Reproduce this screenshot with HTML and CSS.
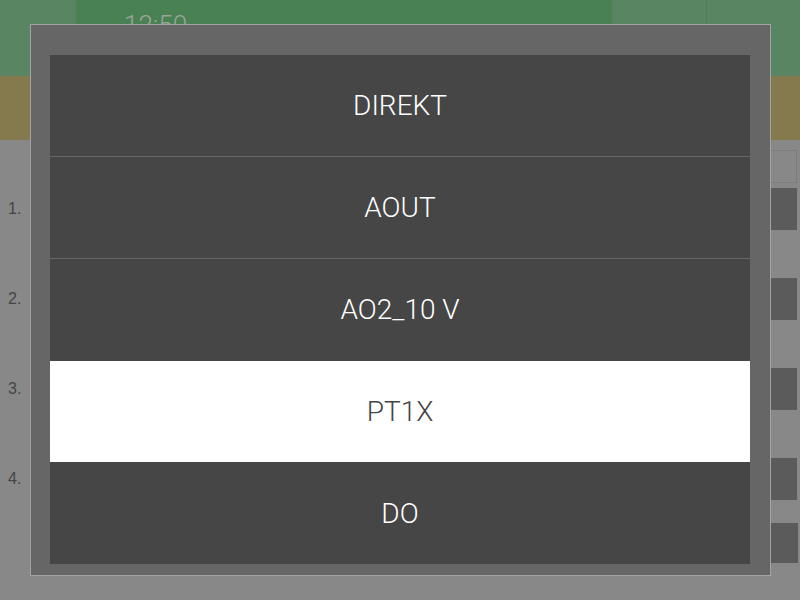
FILE: index.html
```html
<!DOCTYPE html>
<html lang="en">
<head>
    <meta charset="UTF-8">
    <meta name="viewport" content="width=device-width, initial-scale=1.0">
    <title>Signal Select</title>
    <link rel="stylesheet" href="styles.css">
</head>
<body>
    <!-- Page behind the dialog -->
    <div class="topbar">
        <div class="tab tab-side"></div>
        <div class="tab tab-main"><span class="clock">12:50</span></div>
        <div class="tab tab-side tab-btn"></div>
        <div class="tab tab-side tab-btn"></div>
    </div>
    <div class="statusbar"></div>

    <div class="content">
        <div class="row row-head">
            <span class="num"></span>
            <span class="box box-outline"></span>
        </div>
        <div class="row">
            <span class="num">1.</span>
            <span class="box"></span>
        </div>
        <div class="row">
            <span class="num">2.</span>
            <span class="box"></span>
        </div>
        <div class="row">
            <span class="num">3.</span>
            <span class="box"></span>
        </div>
        <div class="row">
            <span class="num">4.</span>
            <span class="box"></span>
        </div>
        <div class="row row-last">
            <span class="num"></span>
            <span class="box box-wide"></span>
        </div>
    </div>

    <!-- Selection dialog -->
    <div class="dialog">
        <ul class="options">
            <li class="option">DIREKT</li>
            <li class="option">AOUT</li>
            <li class="option">AO2_10 V</li>
            <li class="option selected">PT1X</li>
            <li class="option">DO</li>
        </ul>
    </div>
</body>
</html>
```

FILE: styles.css
```css
/* Global Styles */
body {
    font-family: 'Liberation Sans', Arial, sans-serif;
    margin: 0;
    padding: 0;
    background-color: #888888;
    height: 600px;
    overflow: hidden;
}

/* Top bar */
.topbar {
    display: flex;
    height: 76px;
    background-color: #4a8153;
}

.tab {
    height: 100%;
}

.tab-side {
    width: 76px;
    background-color: #5a8562;
}

.tab-main {
    flex: 1;
    padding-left: 48px;
}

.tab-btn {
    width: 94px;
}

.tab-btn + .tab-btn {
    margin-left: 1px;
    width: 93px;
}

.clock {
    display: inline-block;
    margin-top: 10px;
    font-family: Roboto, sans-serif;
    font-weight: 300;
    font-size: 26px;
    color: #9aa49b;
}

.statusbar {
    height: 64px;
    background-color: #857a4e;
}

/* Rows behind the dialog */
.content {
    display: flex;
    flex-direction: column;
    padding-top: 10px;
}

.row {
    display: flex;
    justify-content: space-between;
    align-items: center;
    height: 42px;
    margin-bottom: 48px;
    padding-left: 8px;
    padding-right: 3px;
}

.row-head {
    height: 33px;
    align-items: stretch;
    margin-bottom: 5px;
}

.row-last {
    height: 40px;
    margin-top: -25px;
    padding-right: 2px;
}

.row .num {
    font-size: 16px;
    color: #444444;
}

.box {
    width: 27px;
    height: 42px;
    background-color: #5b5b5b;
}

.box-outline {
    height: auto;
    width: 25px;
    background-color: #888888;
    border: 1px solid #7c7c7c;
}

.box-wide {
    width: 28px;
    height: 40px;
}

/* Dialog */
.dialog {
    position: fixed;
    top: 24px;
    left: 30px;
    box-sizing: border-box;
    width: 741px;
    height: 552px;
    padding: 30px 20px 11px 19px;
    background-color: #666666;
    border: 1px solid #a3a3a3;
}

.options {
    list-style: none;
    margin: 0;
    padding: 0;
    background-color: #464646;
}

.option {
    height: 101px;
    display: flex;
    align-items: center;
    justify-content: center;
    font-family: Roboto, sans-serif;
    font-weight: 300;
    font-size: 28px;
    color: #ffffff;
    background-color: #464646;
}

.option + .option {
    border-top: 1px solid #666666;
}

.option.selected {
    background-color: #ffffff;
    color: #444444;
    border-top-color: #464646;
}

.option.selected + .option {
    border-top-color: #464646;
}
```
